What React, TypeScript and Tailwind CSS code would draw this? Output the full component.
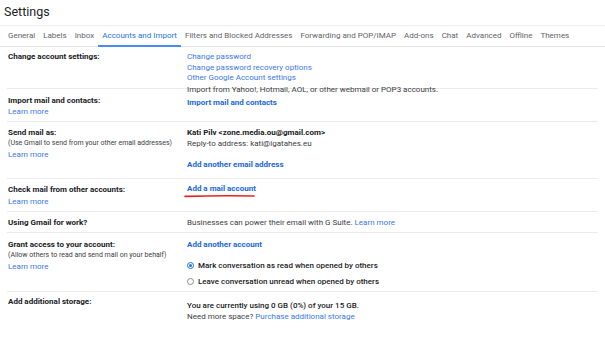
const tabs = [
  "General",
  "Labels",
  "Inbox",
  "Accounts and Import",
  "Filters and Blocked Addresses",
  "Forwarding and POP/IMAP",
  "Add-ons",
  "Chat",
  "Advanced",
  "Offline",
  "Themes",
];

function LearnMore() {
  return <div className="text-[#3b78e7]">Learn more</div>;
}

function Radio({ checked, label }: { checked?: boolean; label: string }) {
  return (
    <div className="flex items-center gap-[4px]">
      {checked ? (
        <span className="w-[7px] h-[7px] rounded-full border-[1.5px] border-[#1a73e8] flex items-center justify-center">
          <span className="w-[3px] h-[3px] rounded-full bg-[#1a73e8]"></span>
        </span>
      ) : (
        <span className="w-[7px] h-[7px] rounded-full border border-[#8a8d91]"></span>
      )}
      <span className="font-medium text-[#202124]">{label}</span>
    </div>
  );
}

export default function App() {
  return (
    <div
      className="w-[605px] h-[343px] bg-white overflow-hidden text-[8px] leading-[10.5px] text-[#3c4043]"
      style={{ fontFamily: "Roboto, 'Liberation Sans', sans-serif" }}
    >
      {/* Header */}
      <div className="h-[26px] border-b border-[#eceff1] pl-[4px] pt-[3px]">
        <div className="text-[12.5px] leading-[18px] text-[#202124]">Settings</div>
      </div>

      {/* Tabs */}
      <div className="h-[21px] border-b border-[#e3e5e8] flex pl-[4px]">
        {tabs.map((t) => (
          <div
            key={t}
            className={
              t === "Accounts and Import"
                ? "px-[4px] h-[21px] pt-[5px] text-[#1a73e8] border-b-2 border-[#4a8af4]"
                : "px-[4px] h-[21px] pt-[5px] text-[#5f6368]"
            }
          >
            {t}
          </div>
        ))}
      </div>

      {/* Change account settings */}
      <div className="h-[42px] border-b border-[#e8eaed] mx-[7px] flex pt-[5px]">
        <div className="w-[180px] pl-[1px] font-bold text-[#202124]">Change account settings:</div>
        <div className="text-[#3b78e7]">
          <div>Change password</div>
          <div>Change password recovery options</div>
          <div>Other Google Account settings</div>
        </div>
      </div>

      {/* Import */}
      <div className="h-[33px] border-b border-[#e8eaed] mx-[7px] flex">
        <div className="w-[180px] pl-[1px] pt-[7px]">
          <div className="font-bold text-[#202124]">Import mail and contacts:</div>
          <LearnMore />
        </div>
        <div className="-mt-[4px]">
          <div>Import from Yahoo!, Hotmail, AOL, or other webmail or POP3 accounts.</div>
          <div className="mt-[2.5px] font-bold text-[#1a66d9]">Import mail and contacts</div>
        </div>
      </div>

      {/* Send mail as */}
      <div className="h-[57px] border-b border-[#e8eaed] mx-[7px] flex pt-[5px]">
        <div className="w-[180px] pl-[1px] leading-[11px]">
          <div className="font-bold text-[#202124]">Send mail as:</div>
          <div className="text-[7px] text-[#3c4043]">(Use Gmail to send from your other email addresses)</div>
          <LearnMore />
        </div>
        <div className="leading-[11px]">
          <div className="font-bold text-[#202124]">Kati Pilv &lt;zone.media.ou@gmail.com&gt;</div>
          <div>Reply-to address: kati@igatahes.eu</div>
          <div className="mt-[10px] font-bold text-[#1a66d9]">Add another email address</div>
        </div>
      </div>

      {/* Check mail */}
      <div className="h-[33px] border-b border-[#e8eaed] mx-[7px] flex pt-[5px]">
        <div className="w-[180px] pl-[1px] leading-[12px]">
          <div className="font-bold text-[#202124]">Check mail from other accounts:</div>
          <LearnMore />
        </div>
        <div className="relative">
          <div className="font-bold text-[#1a66d9] leading-[10px]">Add a mail account</div>
          <svg className="absolute left-[-3px] top-[10px]" width="72" height="4" viewBox="0 0 72 4">
            <path d="M1 2.4 Q36 1.4 70 2" stroke="#e8231f" strokeWidth="1.6" fill="none" strokeLinecap="round" />
          </svg>
        </div>
      </div>

      {/* Using Gmail for work */}
      <div className="h-[21px] border-b border-[#e8eaed] mx-[7px] flex pt-[5.5px]">
        <div className="w-[180px] pl-[1px] font-bold text-[#202124]">Using Gmail for work?</div>
        <div>
          Businesses can power their email with G Suite. <span className="text-[#3b78e7]">Learn more</span>
        </div>
      </div>

      {/* Grant access */}
      <div className="h-[59px] border-b border-[#e8eaed] mx-[7px] flex pt-[6px]">
        <div className="w-[180px] pl-[1px] leading-[11px]">
          <div className="font-bold text-[#202124]">Grant access to your account:</div>
          <div className="text-[7px] text-[#3c4043]">(Allow others to read and send mail on your behalf)</div>
          <LearnMore />
        </div>
        <div className="leading-[11px]">
          <div className="font-bold text-[#1a66d9]">Add another account</div>
          <div className="mt-[10px] flex flex-col gap-[5px]">
            <Radio checked label="Mark conversation as read when opened by others" />
            <Radio label="Leave conversation unread when opened by others" />
          </div>
        </div>
      </div>

      {/* Storage */}
      <div className="mx-[7px] flex pt-[5px]">
        <div className="w-[180px] pl-[1px] font-bold text-[#202124]">Add additional storage:</div>
        <div className="pt-[3px] leading-[11px]">
          <div className="font-medium text-[#202124]">You are currently using 0 GB (0%) of your 15 GB.</div>
          <div>
            Need more space? <span className="text-[#3b78e7]">Purchase additional storage</span>
          </div>
        </div>
      </div>
    </div>
  );
}
